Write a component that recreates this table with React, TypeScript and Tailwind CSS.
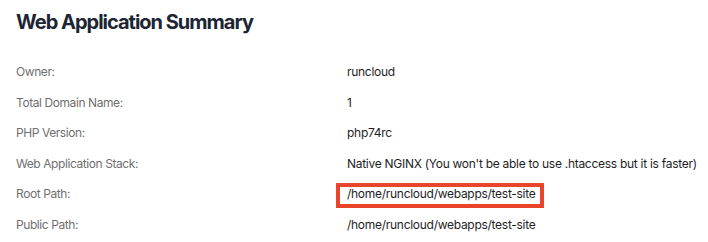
const rows: { label: string; value: string; highlight?: boolean }[] = [
  { label: "Owner:", value: "runcloud" },
  { label: "Total Domain Name:", value: "1" },
  { label: "PHP Version:", value: "php74rc" },
  { label: "Web Application Stack:", value: "Native NGINX (You won't be able to use .htaccess but it is faster)" },
  { label: "Root Path:", value: "/home/runcloud/webapps/test-site", highlight: true },
  { label: "Public Path:", value: "/home/runcloud/webapps/test-site" },
];

export default function App() {
  return (
    <div className="w-[708px] h-[242px] bg-white overflow-hidden pl-4 pt-2 font-['Inter',_'Liberation_Sans',_sans-serif]">
      <h1 className="text-[20px] leading-[28px] font-bold text-[#1c2533] tracking-[-1px]">
        Web Application Summary
      </h1>
      <div className="mt-[21px]">
        {rows.map((r) => (
          <div key={r.label} className="flex h-[30.6px] text-[12px] leading-[30.6px]">
            <div className="w-[331px] shrink-0 text-[#6f6f6f] tracking-[-0.42px]">{r.label}</div>
            <div className="relative text-[#1e1e1e] whitespace-nowrap tracking-[-0.28px]">
              {r.value}
              {r.highlight && (
                <div className="absolute -left-[11px] top-[4px] w-[208px] h-[25px] border-4 border-[#e8452c]" />
              )}
            </div>
          </div>
        ))}
      </div>
    </div>
  );
}
